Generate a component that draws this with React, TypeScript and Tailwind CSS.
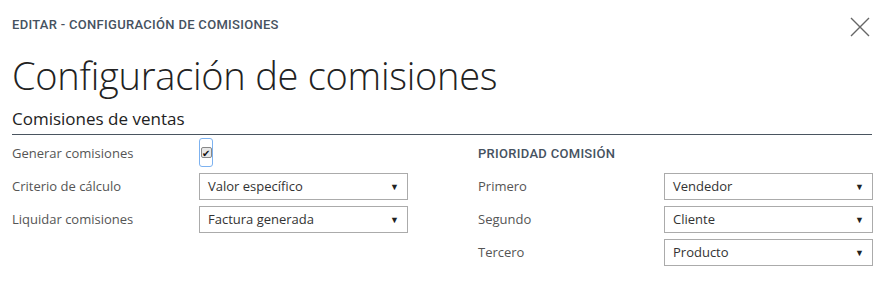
import React from "react";

const Select = ({ value }: { value: string }) => (
  <div className="flex items-center justify-between w-[209px] h-[27px] border border-[#ababab] bg-white pl-2 pr-[8px] text-[13px] text-[#333]">
    <span>{value}</span>
    <span className="text-[9px] text-[#222]">▼</span>
  </div>
);

const Row = ({ label, children, labelW }: { label: string; children: React.ReactNode; labelW: string }) => (
  <div className="flex items-center h-[33px]">
    <div className={`${labelW} shrink-0 text-[13px] text-[#555]`}>{label}</div>
    {children}
  </div>
);

const App = () => {
  return (
    <div
      className="w-[880px] h-[303px] bg-white overflow-hidden"
      style={{ fontFamily: '"Open Sans", "Noto Sans", sans-serif' }}
    >
      <div className="flex justify-between items-start pl-3 pr-[10px] pt-[15px]">
        <div
          className="text-[13px] font-medium text-[#46525f] tracking-[0.3px]"
          style={{ fontFamily: 'Roboto, sans-serif' }}
        >
          EDITAR - CONFIGURACIÓN DE COMISIONES
        </div>
        <svg width="20" height="20" viewBox="0 0 20 20" className="mt-[2px]">
          <path d="M1 1 L19 19 M19 1 L1 19" stroke="#666" strokeWidth="1.4" />
        </svg>
      </div>
      <h1 className="pl-3 mt-[14px] text-[38px] font-light leading-[48px] text-[#222] tracking-[-0.25px]">
        Configuración de comisiones
      </h1>
      <div className="ml-3 mr-[8px] mt-[8px] border-b border-[#4a5560] pb-[3px] text-[17px] leading-[24px] text-[#222]">
        Comisiones de ventas
      </div>
      <div className="flex pl-3 pt-[2px]">
        <div className="w-[466px] shrink-0">
          <Row label="Generar comisiones" labelW="w-[187px]">
            <div className="flex items-center justify-center w-[14px] h-[29px] rounded-[3px] border border-[#7db2f0] -mt-[2px]">
              <div className="flex items-center justify-center w-[11px] h-[11px] rounded-[2px] border border-[#888] bg-[#e8e8e8] text-[10px] leading-none text-[#111]">
                ✔
              </div>
            </div>
          </Row>
          <Row label="Criterio de cálculo" labelW="w-[187px]">
            <Select value="Valor específico" />
          </Row>
          <Row label="Liquidar comisiones" labelW="w-[187px]">
            <Select value="Factura generada" />
          </Row>
        </div>
        <div className="shrink-0">
          <div className="flex items-center h-[33px]">
            <div
              className="text-[13px] font-medium text-[#46525f] tracking-[0.3px]"
              style={{ fontFamily: 'Roboto, sans-serif' }}
            >
              PRIORIDAD COMISIÓN
            </div>
          </div>
          <Row label="Primero" labelW="w-[186px]">
            <Select value="Vendedor" />
          </Row>
          <Row label="Segundo" labelW="w-[186px]">
            <Select value="Cliente" />
          </Row>
          <Row label="Tercero" labelW="w-[186px]">
            <Select value="Producto" />
          </Row>
        </div>
      </div>
    </div>
  );
};

export default App;
